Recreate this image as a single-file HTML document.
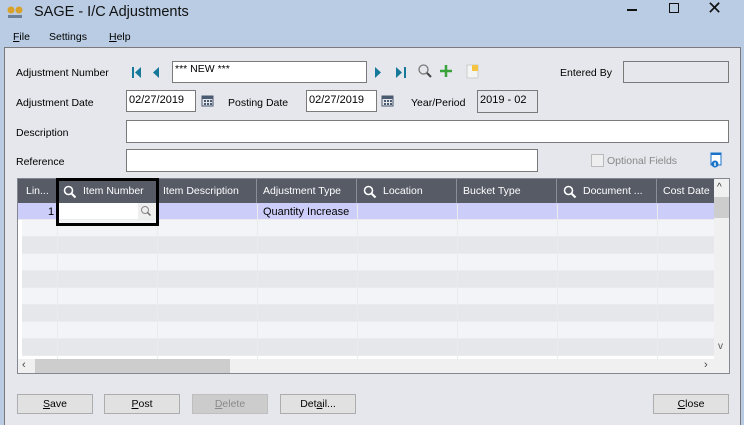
<!DOCTYPE html>
<html><head><meta charset="utf-8"><style>
*{box-sizing:border-box;margin:0;padding:0}
body{width:744px;height:425px;overflow:hidden;background:#b9cce3;font-family:"Liberation Sans",sans-serif;font-size:10.5px;color:#000;position:relative}
.a{position:absolute}
.tb{background:#fff;border:1px solid #7a7a7a;height:22px}
.ro{background:#e6e7ec;border:1px solid #7a7a7a}
.lab{font-size:10.5px}
.btn{position:absolute;top:394px;height:20px;width:76px;border:1px solid #adadad;background:#e1e1e1;text-align:center;line-height:18px;font-size:10.5px}
.hd{position:absolute;top:0;height:25px;line-height:25px;color:#fff;font-size:10.5px;border-right:1px solid #8a8e96;padding-left:6px;white-space:nowrap;overflow:hidden}
.row{position:absolute;left:4px;width:692px;height:17px;border-bottom:1px solid #ebebee}
.vl{position:absolute;top:25px;width:1px;height:155px;background:#ebebee}
</style></head><body>
<svg class="a" style="left:7px;top:6px" width="16" height="14"><circle cx="4" cy="4" r="3.5" fill="#d9a02a"/><circle cx="12" cy="4" r="3.5" fill="#d9a02a"/><rect x="1" y="9" width="14" height="3" fill="#6b7f99"/></svg>
<div class="a" style="left:34px;top:4px;font-size:14.5px;color:#111">SAGE - I/C Adjustments</div>
<div class="a" style="left:627px;top:9px;width:10px;height:2px;background:#111"></div>
<div class="a" style="left:669px;top:3px;width:10px;height:10px;border:1.5px solid #111"></div>
<div class="a" style="left:707px;top:-2px;font-size:18px;color:#111">✕</div>
<div class="a" style="left:13px;top:31px"><u>F</u>ile</div>
<div class="a" style="left:49px;top:31px">Settings</div>
<div class="a" style="left:109px;top:31px"><u>H</u>elp</div>
<div class="a" style="left:4px;top:47px;width:737px;height:378px;background:#e6e7ec;border-left:1px solid #7a7a7a;border-top:1px solid #7a7a7a;border-right:1px solid #7a7a7a"></div>
<div class="a lab" style="left:16px;top:67px">Adjustment Number</div>
<svg class="a" style="left:131px;top:66px" width="40" height="14"><rect x="1" y="1" width="2" height="11" fill="#17799a"/><path d="M4 6.5L10 1V12Z" fill="#17799a"/><path d="M22 6.5L28 1V12Z" fill="#17799a"/></svg>
<div class="a tb" style="left:172px;top:61px;width:195px;padding:1px 2px">*** NEW ***</div>
<svg class="a" style="left:372px;top:66px" width="40" height="14"><path d="M3 1L9 6.5L3 12Z" fill="#17799a"/><path d="M24 1L30 6.5L24 12Z" fill="#17799a"/><rect x="32" y="1" width="2" height="11" fill="#17799a"/></svg>
<svg class="a" style="left:417px;top:63px" width="16" height="16"><circle cx="6.5" cy="6.5" r="4.5" fill="none" stroke="#777" stroke-width="1.3"/><path d="M10 10L14 14" stroke="#444" stroke-width="2"/></svg>
<svg class="a" style="left:439px;top:64px" width="14" height="14"><path d="M7 1V13M1 7H13" stroke="#3aa23a" stroke-width="2.5"/></svg>
<svg class="a" style="left:466px;top:63px" width="14" height="16"><rect x="1" y="2" width="11" height="13" fill="#f4f4f4" stroke="#ccc"/><rect x="6" y="2" width="6" height="6" fill="#f5c542"/></svg>
<div class="a lab" style="left:560px;top:67px">Entered By</div>
<div class="a ro" style="left:623px;top:61px;width:106px;height:22px"></div>
<div class="a lab" style="left:16px;top:97px">Adjustment Date</div>
<div class="a tb" style="left:126px;top:90px;width:70px;padding:3px 2px;font-size:11px">02/27/2019</div>
<svg class="a" style="left:201px;top:94px" width="13" height="13"><rect x="1" y="2" width="11" height="10" fill="none" stroke="#4a5a70"/><rect x="1" y="2" width="11" height="3" fill="#4a5a70"/><g fill="#4a5a70"><rect x="3" y="6" width="2" height="2"/><rect x="6" y="6" width="2" height="2"/><rect x="9" y="6" width="2" height="2"/><rect x="3" y="9" width="2" height="2"/><rect x="6" y="9" width="2" height="2"/><rect x="9" y="9" width="2" height="2"/></g></svg>
<div class="a lab" style="left:228px;top:97px">Posting Date</div>
<div class="a tb" style="left:306px;top:90px;width:71px;padding:3px 2px;font-size:11px">02/27/2019</div>
<svg class="a" style="left:381px;top:94px" width="13" height="13"><rect x="1" y="2" width="11" height="10" fill="none" stroke="#4a5a70"/><rect x="1" y="2" width="11" height="3" fill="#4a5a70"/><g fill="#4a5a70"><rect x="3" y="6" width="2" height="2"/><rect x="6" y="6" width="2" height="2"/><rect x="9" y="6" width="2" height="2"/><rect x="3" y="9" width="2" height="2"/><rect x="6" y="9" width="2" height="2"/><rect x="9" y="9" width="2" height="2"/></g></svg>
<div class="a lab" style="left:411px;top:97px">Year/Period</div>
<div class="a ro" style="left:477px;top:90px;width:61px;height:23px;padding:3px 2px;font-size:11px">2019 - 02</div>
<div class="a lab" style="left:16px;top:127px">Description</div>
<div class="a tb" style="left:126px;top:120px;width:603px;height:23px"></div>
<div class="a lab" style="left:16px;top:156px">Reference</div>
<div class="a tb" style="left:126px;top:149px;width:412px;height:23px"></div>
<div class="a" style="left:591px;top:154px;width:13px;height:13px;border:1px solid #bbb;background:#eee"></div>
<div class="a lab" style="left:607px;top:155px;color:#888">Optional Fields</div>
<svg class="a" style="left:710px;top:152px" width="12" height="16"><rect x="1" y="1" width="10" height="12" fill="#fff" stroke="#1a73c8"/><rect x="1" y="1" width="10" height="2" fill="#1a73c8"/><circle cx="5" cy="12" r="3.5" fill="#1a73c8"/><rect x="4.3" y="10.5" width="1.4" height="3.5" fill="#fff"/></svg>
<div class="a" style="left:17px;top:178px;width:713px;height:196px;border:1px solid #828790;background:#fff;overflow:hidden">
 <div class="a" style="left:0;top:0;width:696px;height:25px;background:#565b66"></div>
 <div class="hd" style="left:0;width:39px;padding-left:8px">Lin...</div>
 <div class="hd" style="left:39px;width:100px;padding-left:26px">Item Number</div>
 <div class="hd" style="left:139px;width:100px">Item Description</div>
 <div class="hd" style="left:239px;width:100px">Adjustment Type</div>
 <div class="hd" style="left:339px;width:100px;padding-left:26px">Location</div>
 <div class="hd" style="left:439px;width:100px">Bucket Type</div>
 <div class="hd" style="left:539px;width:100px;padding-left:26px">Document ...</div>
 <div class="hd" style="left:639px;width:57px;border-right:none">Cost Date</div>
 <svg class="a" style="left:45px;top:6px" width="14" height="14"><circle cx="5.5" cy="5.5" r="4" fill="none" stroke="#fff" stroke-width="1.6"/><path d="M8.5 8.5L12.5 12.5" stroke="#fff" stroke-width="2"/></svg>
 <svg class="a" style="left:345px;top:6px" width="14" height="14"><circle cx="5.5" cy="5.5" r="4" fill="none" stroke="#fff" stroke-width="1.6"/><path d="M8.5 8.5L12.5 12.5" stroke="#fff" stroke-width="2"/></svg>
 <svg class="a" style="left:545px;top:6px" width="14" height="14"><circle cx="5.5" cy="5.5" r="4" fill="none" stroke="#fff" stroke-width="1.6"/><path d="M8.5 8.5L12.5 12.5" stroke="#fff" stroke-width="2"/></svg>
 <div class="row" style="top:24px;background:#cccdf9;left:0;width:696px"></div>
 <div class="row" style="top:41px;background:#f3f4f8"></div>
 <div class="row" style="top:58px;background:#e6e7eb"></div>
 <div class="row" style="top:75px;background:#f3f4f8"></div>
 <div class="row" style="top:92px;background:#e6e7eb"></div>
 <div class="row" style="top:109px;background:#f3f4f8"></div>
 <div class="row" style="top:126px;background:#e6e7eb"></div>
 <div class="row" style="top:143px;background:#f3f4f8"></div>
 <div class="row" style="top:160px;background:#e6e7eb"></div>
 <div class="vl" style="left:39px"></div><div class="vl" style="left:139px"></div><div class="vl" style="left:239px"></div><div class="vl" style="left:339px"></div><div class="vl" style="left:439px"></div><div class="vl" style="left:539px"></div><div class="vl" style="left:639px"></div>
 <div class="a" style="left:30px;top:27px;font-size:11px">1</div>
 <div class="a" style="left:245px;top:27px;font-size:11px">Quantity Increase</div>
 <div class="a" style="left:40px;top:24px;width:99px;height:16px;background:#fff"></div>
 <div class="a" style="left:120px;top:24px;width:19px;height:16px;background:#eee"></div>
 <svg class="a" style="left:122px;top:26px" width="12" height="12"><circle cx="5" cy="5" r="3.5" fill="none" stroke="#888"/><path d="M7.5 7.5L10.5 10.5" stroke="#666" stroke-width="1.3"/></svg>
 <div class="a" style="left:696px;top:0;width:16px;height:180px;background:#f0f0f0"></div>
 <div class="a" style="left:699px;top:3px;font-size:10px;color:#333">^</div>
 <div class="a" style="left:696px;top:18px;width:16px;height:21px;background:#cdcdcd"></div>
 <div class="a" style="left:700px;top:162px;font-size:10px;color:#555">v</div>
 <div class="a" style="left:0;top:180px;width:712px;height:15px;background:#f0f0f0"></div>
 <div class="a" style="left:17px;top:180px;width:195px;height:15px;background:#cdcdcd"></div>
 <div class="a" style="left:4px;top:180px;font-size:11px;color:#444">‹</div>
 <div class="a" style="left:686px;top:180px;font-size:11px;color:#444">›</div>
</div>
<div class="a" style="left:56px;top:178px;width:103px;height:48px;border:3px solid #000"></div>
<div class="btn" style="left:17px"><u>S</u>ave</div>
<div class="btn" style="left:104px"><u>P</u>ost</div>
<div class="btn" style="left:192px;background:#cccccc;color:#8a8a8a;border-color:#bfbfbf"><u>D</u>elete</div>
<div class="btn" style="left:280px">Det<u>a</u>il...</div>
<div class="btn" style="left:653px"><u>C</u>lose</div>
</body></html>
